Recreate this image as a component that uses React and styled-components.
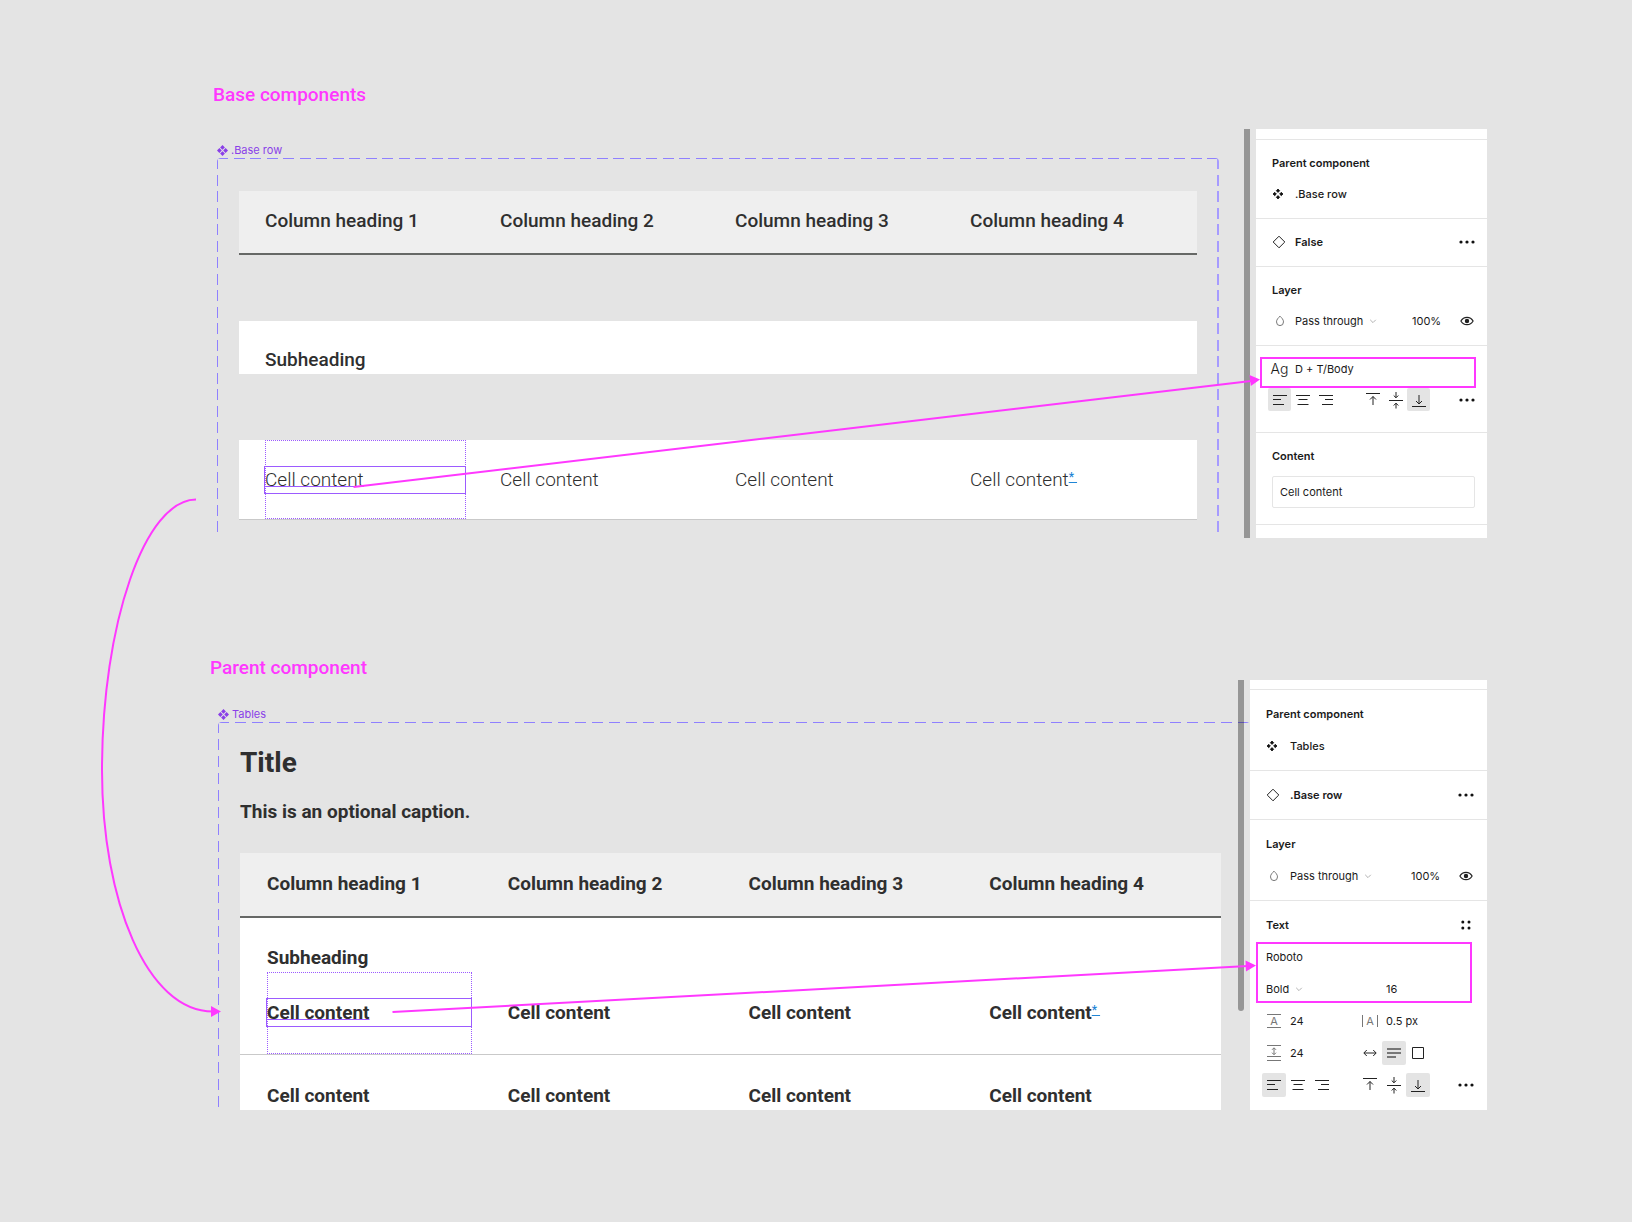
import React from "react";
import styled, { createGlobalStyle, css } from "styled-components";

const color = {
  canvas: "#e4e4e4",
  ink: "#2f2f2f",
  panelInk: "#1a1a1a",
  note: "#ff38ff",
  frame: "#8f80ff",
  frameSoft: "#a69bff",
  component: "#8a3fe8",
  inspect: "#9c5bff",
  rule: "#e5e5e5",
};

const GlobalStyle = createGlobalStyle`
  *, *::before, *::after { box-sizing: border-box; }
  body { margin: 0; background: ${color.canvas}; }
  button, input, select { font: inherit; color: inherit; }
`;

const Canvas = styled.main`
  position: relative;
  display: flex;
  flex-direction: column;
  gap: 118px;
  padding: 83px 145px 112px 210px;
  font-family: Roboto, "Liberation Sans", sans-serif;
  color: ${color.ink};
`;

const Annotations = styled.svg`
  position: absolute;
  inset: 0;
  width: 100%;
  height: 100%;
  pointer-events: none;
`;

const Section = styled.section`
  display: flex;
  flex-direction: column;
  gap: ${(p) => p.$gap}px;
  padding-left: ${(p) => p.$indent}px;
`;

const SectionTitle = styled.h2`
  margin: 0;
  font-size: 19px;
  line-height: 24px;
  font-weight: 500;
  color: ${color.note};
`;

const SectionBody = styled.div`
  display: grid;
  grid-template-columns: minmax(0, 1fr) ${(p) => p.$panelWidth}px;
`;

const Board = styled.div`
  display: flex;
  flex-direction: column;
  padding: ${(p) => p.$padding};
`;

const FrameLabel = styled.div`
  display: flex;
  align-items: center;
  gap: 3px;
  height: 15px;
  padding-bottom: 1px;
  font: 400 11px/14px Inter, sans-serif;
  color: ${color.component};
`;

const dashes = (angle, ink = color.frame) =>
  `linear-gradient(${angle}, ${ink} 0 11px, transparent 11px 17px, ${ink} 17px 28px, transparent 28px)`;

const Frame = styled.div`
  flex: 1;
  padding: ${(p) => p.$padding};
  border-radius: 4px 4px 0 0;
  background-image: ${dashes("90deg")}, ${dashes("180deg")}${(p) => p.$closed && css`, ${dashes("180deg", color.frameSoft)}`};
  background-repeat: repeat-x, repeat-y, repeat-y;
  background-position: 0 0, 0 0, 100% 0;
  background-size: ${(p) => `${p.$period}px 1px, 1px ${p.$period}px, 2px ${p.$period}px`};
`;

const Title = styled.h3`
  margin: 0 0 20px;
  font-size: 28px;
  line-height: 32px;
  font-weight: 700;
`;

const Caption = styled.p`
  margin: 0 0 28px;
  font-size: 19px;
  line-height: 26px;
  font-weight: 700;
`;

const Table = styled.table`
  display: flex;
  flex-direction: column;
  gap: ${(p) => p.$spread}px;
  font-size: 19px;
  line-height: ${(p) => p.$line}px;
  text-align: left;
  --cell-gap: ${(p) => p.$gap}px;
  --cell-inset: ${(p) => p.$inset}px;
  --cell-bottom: ${(p) => p.$bottom}px;

  th { font-weight: ${(p) => (p.$bold ? 700 : 500)}; }
  td { font-weight: ${(p) => (p.$bold ? 700 : 300)}; }
`;

const TableBody = styled.tbody`
  display: flex;
  flex-direction: column;
  gap: ${(p) => p.$spread}px;
`;

const TableHead = styled.thead`
  display: block;
`;

const Row = styled.tr`
  display: grid;
  grid-template-columns: repeat(4, minmax(0, 1fr));
  column-gap: var(--cell-gap);
  padding: 0 var(--cell-inset);
  background: #fff;
  ${(p) => p.$kind === "head" && css`
    background: #efefef;
    border-bottom: 2px solid #666866;
  `}
  ${(p) => p.$kind === "body" && css`
    border-bottom: 1px solid #c9c9c9;
  `}
`;

const HeadCell = styled.th`
  padding: 17px 0 19px;
`;

const SubheadCell = styled.th`
  grid-column: 1 / -1;
  padding: 26px 0 1px;
`;

const Cell = styled.td`
  position: relative;
  padding: 27px 0 ${(p) => (p.$cut ? "1px" : "var(--cell-bottom)")};
  ${(p) => p.$selected && css`
    &::before {
      content: "";
      position: absolute;
      inset: 0;
      border: 1px dotted ${color.inspect};
    }
  `}
`;

const SelectedText = styled.span`
  position: relative;
  display: block;
  text-decoration-line: underline;
  text-decoration-color: ${color.inspect};
  text-decoration-thickness: 1px;
  text-underline-offset: 0;
  text-decoration-skip-ink: none;
  &::after {
    content: "";
    position: absolute;
    inset: -1px 0 -1px -1px;
    border: 1px solid ${color.inspect};
  }
`;

const NoteLink = styled.a`
  font-size: 12px;
  font-weight: 500;
  line-height: 1;
  vertical-align: 5px;
  color: #1f86d6;
`;

/* ---- Inspector panel ---- */

const Panel = styled.aside`
  --row: ${(p) => p.$row}px;
  --tool: ${(p) => p.$row - 8}px;
  --top: ${(p) => p.$top}px;
  position: relative;
  background: #fff;
  padding-top: ${(p) => p.$lead}px;
  font: 400 11px/16px Inter, sans-serif;
  color: ${color.panelInk};
`;

const ScrollThumb = styled.div`
  position: absolute;
  top: 0;
  left: -12px;
  width: 6px;
  height: ${(p) => p.$size};
  border-radius: ${(p) => (p.$ends ? "0 0 3px 3px" : "0")};
  background: rgba(0, 0, 0, 0.34);
`;

const Group = styled.div`
  border-top: 1px solid ${color.rule};
  padding: var(--top) 0 calc(${(p) => p.$bottom ?? 16}px - var(--top));
`;

const Line = styled.div`
  position: relative;
  display: flex;
  align-items: center;
  height: var(--row);
  padding: 0 9px 0 12px;
`;

const GroupTitle = styled.h4`
  margin: 0;
  padding-left: 4px;
  font-size: 11px;
  font-weight: 600;
`;

const Slot = styled.span`
  display: flex;
  align-items: center;
  justify-content: center;
  width: var(--tool);
  height: var(--tool);
  margin-right: 4px;
  flex: none;
`;

const Name = styled.span`
  font-weight: ${(p) => (p.$strong ? 600 : 500)};
`;

const Push = styled.span`
  margin-left: auto;
  display: flex;
  align-items: center;
`;

const Tool = styled.button`
  display: flex;
  align-items: center;
  justify-content: center;
  width: var(--tool);
  height: var(--tool);
  padding: 0;
  border: 0;
  border-radius: 2px;
  background: ${(p) => (p.$on ? color.canvas : "transparent")};
`;

const Tools = styled.div`
  display: flex;
  & + & { margin-left: 24px; }
`;

const Picker = styled.label`
  display: flex;
  align-items: center;
  gap: 5px;
  padding-left: ${(p) => (p.$flush ? 4 : 0)}px;
  select {
    appearance: none;
    border: 0;
    padding: 0;
    background: none;
    line-height: 16px;
  }
`;

const Field = styled.input`
  width: ${(p) => p.$width}px;
  height: 16px;
  padding: 0;
  border: 0;
  background: none;
  margin: ${(p) => p.$margin || 0};
`;

const StyleButton = styled.button`
  padding: 0;
  border: 0;
  background: none;
`;

const StyleSample = styled(Slot)`
  font-size: 14px;
  font-weight: 300;
`;

const ContentField = styled.input`
  display: block;
  width: calc(100% - 28px);
  height: 32px;
  margin: 5px 12px 0 16px;
  padding: 0 7px;
  border: 1px solid ${color.rule};
  border-radius: 2px;
`;

const FieldPair = styled(Line)`
  display: grid;
  grid-template-columns: 96px 1fr;
`;

const Half = styled.div`
  display: flex;
  align-items: center;
  padding-left: ${(p) => (p.$bare ? 28 : 0)}px;
`;

const LetterGlyph = styled.span`
  display: flex;
  justify-content: center;
  color: #777;
  line-height: 12px;
  ${(p) => p.$sides
    ? css`width: 16px; border: solid #777; border-width: 0 1px;`
    : css`width: 14px; border: solid #777; border-width: 1px 0;`}
`;

const Highlight = styled.div`
  position: relative;
  &::after {
    content: "";
    position: absolute;
    inset: ${(p) => p.$inset};
    border: 2px solid ${color.note};
    pointer-events: none;
  }
`;

/* ---- Icons, drawn on a 24 unit grid ---- */

const IconSvg = styled.svg`
  flex: none;
  width: 24px;
  height: 24px;
`;

const Icon = ({ children, ink = "#222", width = 1 }) => (
  <IconSvg viewBox="0 0 24 24" fill="none" stroke={ink} strokeWidth={width} aria-hidden="true">
    {children}
  </IconSvg>
);

const ComponentIcon = () => (
  <Icon>
    <path
      d="M10 7l1.7 1.7-1.7 1.7-1.7-1.7zM10 13.6l1.700 1.700-1.700 1.700-1.700-1.700zM6.700 10.300l1.700 1.700-1.700 1.700-1.700-1.700zM13.300 10.300l1.700 1.700-1.700 1.700-1.700-1.700z"
      fill="#111" stroke="#111" strokeWidth="0.8" strokeLinejoin="round"
    />
  </Icon>
);
const LabelIcon = () => (
  <svg width="11" height="11" viewBox="0 0 11 11" fill={color.component} aria-hidden="true">
    <path d="M5.5 0l2.4 2.4-2.4 2.4-2.4-2.4zM5.5 6.2l2.4 2.4L5.5 11 3.1 8.6zM2.4 3.1l2.4 2.4-2.4 2.4L0 5.5zM8.6 3.1L11 5.5 8.6 7.9 6.2 5.5z" />
  </svg>
);
const DiamondIcon = () => <Icon><path d="M11 6.2l5.8 5.8-5.8 5.8L5.2 12z" /></Icon>;
const DropIcon = () => <Icon ink="#777"><path d="M12 7.2c1.7 1.6 3.5 3.4 3.5 5.7a3.5 3.7 0 0 1-7 0c0-2.3 1.8-4.1 3.5-5.7z" /></Icon>;
const Chevron = () => (
  <svg width="8" height="8" viewBox="0 0 8 8" fill="none" stroke="#b3b3b3" aria-hidden="true"><path d="M1.2 2.8L4 5.6l2.8-2.8" /></svg>
);
const EyeIcon = () => (
  <Icon width={1.2}>
    <path d="M5.9 12c1.4-2.5 3.6-3.7 6.1-3.700s4.700 1.200 6.100 3.700c-1.400 2.500-3.600 3.700-6.100 3.700S7.300 14.500 5.900 12z" />
    <circle cx="12" cy="12" r="1.6" fill="#222" />
  </Icon>
);
const MoreIcon = () => (
  <Icon><g fill="#111" stroke="none"><circle cx="6" cy="12" r="1.6" /><circle cx="12" cy="12" r="1.6" /><circle cx="18" cy="12" r="1.6" /></g></Icon>
);
const StylesIcon = () => (
  <Icon>
    <g fill="#111" stroke="none">
      <circle cx="8.8" cy="9" r="1.5" /><circle cx="15" cy="9" r="1.5" /><circle cx="8.8" cy="15" r="1.5" /><circle cx="15" cy="15" r="1.5" />
    </g>
  </Icon>
);
const alignPaths = {
  left: "M5 7.5h14M5 11.5h8M5 16.5h11",
  center: "M5 7.5h14M7.5 11.5h9M6.5 16.5h11",
  right: "M5 7.5h14M11 11.5h8M8 16.5h11",
  top: "M5 5.5h14M12 17V8.500M9 11.500l3-3 3 3",
  middle: "M5 12.500h14M12 4v5.500M9.700 7.500l2.300 2.300 2.300-2.300M12 20.500V15M9.700 17.500l2.300-2.300 2.300 2.300",
  bottom: "M5 18.500h14M12 7v9M9 13l3 3 3-3",
};
const AlignIcon = ({ kind }) => <Icon><path d={alignPaths[kind]} /></Icon>;
const ParagraphGapIcon = () => (
  <Icon ink="#777"><path d="M5 4.5h14M5 15.5h14M5 19.5h14M12 7v6.5M10 8.8l2-2 2 2M10 11.7l2 2 2-2" /></Icon>
);
const AutoWidthIcon = () => <Icon><path d="M6 12h12M8.8 9l-3 3 3 3M15.2 9l3 3-3 3" /></Icon>;
const AutoHeightIcon = () => <Icon ink="#777" width={2}><path d="M5 8h14M5 12h14M5 16h9" /></Icon>;
const FixedIcon = () => <Icon><path d="M6.5 6.5h11v11h-11z" /></Icon>;

/* ---- Shared pieces ---- */

const columns = [1, 2, 3, 4];

const HeadRow = () => (
  <Row $kind="head">
    {columns.map((n) => <HeadCell key={n} scope="col">Column heading {n}</HeadCell>)}
  </Row>
);

const SubheadRow = () => (
  <Row><SubheadCell scope="rowgroup" colSpan={4}>Subheading</SubheadCell></Row>
);

const ContentRow = ({ annotated, cut }) => (
  <Row $kind={cut ? "plain" : "body"}>
    {columns.map((n) => (
      <Cell key={n} $selected={annotated && n === 1} $cut={cut}>
        {annotated && n === 1 ? <SelectedText>Cell content</SelectedText> : "Cell content"}
        {annotated && n === 4 && <NoteLink href="#note">*&nbsp;</NoteLink>}
      </Cell>
    ))}
  </Row>
);

const ParentGroup = ({ name }) => (
  <Group>
    <Line><GroupTitle>Parent component</GroupTitle></Line>
    <Line><Slot><ComponentIcon /></Slot><Name>{name}</Name></Line>
  </Group>
);

const InstanceGroup = ({ name }) => (
  <Group>
    <Line>
      <Slot><DiamondIcon /></Slot>
      <Name $strong>{name}</Name>
      <Push><Tool aria-label="More actions"><MoreIcon /></Tool></Push>
    </Line>
  </Group>
);

const LayerGroup = () => (
  <Group>
    <Line><GroupTitle>Layer</GroupTitle></Line>
    <Line>
      <Slot><DropIcon /></Slot>
      <Picker>
        <select aria-label="Blend mode"><option>Pass through</option></select>
        <Chevron />
      </Picker>
      <Push>
        <Field aria-label="Opacity" defaultValue="100%" $width={30} $margin="0 13px 0 0" />
        <Tool aria-label="Toggle visibility"><EyeIcon /></Tool>
      </Push>
    </Line>
  </Group>
);

const AlignLine = () => (
  <Line>
    <Tools>
      {["left", "center", "right"].map((k) => (
        <Tool key={k} $on={k === "left"} aria-label={`Align ${k}`}><AlignIcon kind={k} /></Tool>
      ))}
    </Tools>
    <Tools>
      {["top", "middle", "bottom"].map((k) => (
        <Tool key={k} $on={k === "bottom"} aria-label={`Align ${k}`}><AlignIcon kind={k} /></Tool>
      ))}
    </Tools>
    <Push><Tool aria-label="Type settings"><MoreIcon /></Tool></Push>
  </Line>
);

const BasePanel = () => (
  <Panel $row={31} $lead={10} $top={7}>
    <ScrollThumb $size="100%" />
    <ParentGroup name=".Base row" />
    <InstanceGroup name="False" />
    <LayerGroup />
    <Group $bottom={24}>
      <Highlight $inset="4px 11px -4px 4px">
        <Line>
          <StyleSample>Ag</StyleSample>
          <StyleButton>D + T/Body</StyleButton>
        </Line>
      </Highlight>
      <AlignLine />
    </Group>
    <Group $bottom={23}>
      <Line><GroupTitle as="label" htmlFor="content">Content</GroupTitle></Line>
      <ContentField id="content" defaultValue="Cell content" />
    </Group>
    <Group $bottom={13} />
  </Panel>
);

const TablesPanel = () => (
  <Panel $row={32} $lead={9} $top={8}>
    <ScrollThumb $size="77%" $ends />
    <ParentGroup name="Tables" />
    <InstanceGroup name=".Base row" />
    <LayerGroup />
    <Group $bottom={17}>
      <Line>
        <GroupTitle>Text</GroupTitle>
        <Push><Tool aria-label="Text styles"><StylesIcon /></Tool></Push>
      </Line>
      <Highlight $inset="1px 15px 2px 6px">
        <Line><Field aria-label="Font family" defaultValue="Roboto" $width={160} $margin="0 0 0 4px" /></Line>
        <FieldPair>
          <Picker $flush>
            <select aria-label="Font weight"><option>Bold</option></select>
            <Chevron />
          </Picker>
          <Half $bare><Field aria-label="Font size" defaultValue="16" $width={48} /></Half>
        </FieldPair>
      </Highlight>
      <FieldPair>
        <Half>
          <Slot><LetterGlyph>A</LetterGlyph></Slot>
          <Field aria-label="Line height" defaultValue="24" $width={48} />
        </Half>
        <Half>
          <Slot><LetterGlyph $sides>A</LetterGlyph></Slot>
          <Field aria-label="Letter spacing" defaultValue="0.5 px" $width={48} />
        </Half>
      </FieldPair>
      <FieldPair>
        <Half>
          <Slot><ParagraphGapIcon /></Slot>
          <Field aria-label="Paragraph spacing" defaultValue="24" $width={48} />
        </Half>
        <Half>
          <Tool aria-label="Auto width"><AutoWidthIcon /></Tool>
          <Tool $on aria-label="Auto height"><AutoHeightIcon /></Tool>
          <Tool aria-label="Fixed size"><FixedIcon /></Tool>
        </Half>
      </FieldPair>
      <AlignLine />
    </Group>
  </Panel>
);

export default function App() {
  return (
    <Canvas>
      <GlobalStyle />

      <Section $gap={22} $indent={3}>
        <SectionTitle>Base components</SectionTitle>
        <SectionBody $panelWidth={231}>
          <Board $padding="14px 37px 4px 4px">
            <FrameLabel><LabelIcon />.Base row</FrameLabel>
            <Frame $closed $period={33} $padding="33px 22px 14px">
              <Table $spread={66} $line={26} $inset={26} $gap={34} $bottom={26}>
                <TableHead><HeadRow /></TableHead>
                <TableBody $spread={66}>
                  <SubheadRow />
                  <ContentRow annotated />
                </TableBody>
              </Table>
            </Frame>
          </Board>
          <BasePanel />
        </SectionBody>
      </Section>

      <Section $gap={0} $indent={0}>
        <SectionTitle>Parent component</SectionTitle>
        <SectionBody $panelWidth={237}>
          <Board $padding="27px 0 0 8px">
            <FrameLabel><LabelIcon />Tables</FrameLabel>
            <Frame $period={34} $padding="25px 29px 0 22px">
              <Title>Title</Title>
              <Caption>This is an optional caption.</Caption>
              <Table $bold $spread={0} $line={27} $inset={27} $gap={36} $bottom={28}>
                <TableHead><HeadRow /></TableHead>
                <TableBody $spread={0}>
                  <SubheadRow />
                  <ContentRow annotated />
                  <ContentRow cut />
                </TableBody>
              </Table>
            </Frame>
          </Board>
          <TablesPanel />
        </SectionBody>
      </Section>

      <Annotations viewBox="0 0 1632 1222" preserveAspectRatio="none" aria-hidden="true">
        <g fill="none" stroke={color.note} strokeWidth="2">
          <path d="M353.5 487L1251 381" />
          <path d="M392.5 1012L1248 966" />
          <path d="M196 499.5C145 499.5 102 624 102 770C102 901 147 1011.5 213 1011.5" />
        </g>
        <g fill={color.note}>
          <path d="M1249.5 375l10.5 4.5-9.2 6.5z" />
          <path d="M1245.500 960.500l10.500 5-10 6z" />
          <path d="M211 1006l10 5.500-10 5.500z" />
        </g>
      </Annotations>
    </Canvas>
  );
}
